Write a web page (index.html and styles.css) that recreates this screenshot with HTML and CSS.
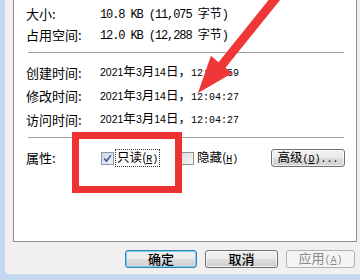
FILE: index.html
```html
<!DOCTYPE html>
<html>
<head>
<meta charset="utf-8">
<link rel="stylesheet" href="styles.css">
</head>
<body>
<div class="window">
  <div class="panel">
    <div class="row">
      <span class="label">大小:</span>
      <span class="val">10.8 KB (11,075 <span class="cj">字节</span>)</span>
    </div>
    <div class="row">
      <span class="label">占用空间:</span>
      <span class="val">12.0 KB (12,288 <span class="cj">字节</span>)</span>
    </div>
    <div class="sep"></div>
    <div class="times">
      <div class="row trow">
        <span class="label">创建时间:</span>
        <span class="date">2021<span class="cj">年</span>3<span class="cj">月</span>14<span class="cj">日，</span><span class="time">12:04:59</span></span>
      </div>
      <div class="row trow">
        <span class="label">修改时间:</span>
        <span class="date">2021<span class="cj">年</span>3<span class="cj">月</span>14<span class="cj">日，</span><span class="time">12:04:27</span></span>
      </div>
      <div class="row trow">
        <span class="label">访问时间:</span>
        <span class="date">2021<span class="cj">年</span>3<span class="cj">月</span>14<span class="cj">日，</span><span class="time">12:04:27</span></span>
      </div>
    </div>
    <div class="sep sep2"></div>
    <div class="attrs">
      <span class="label">属性:</span>
      <label class="check ro">
        <span class="box checked"><svg width="9" height="9" viewBox="0 0 9 9"><path d="M1.2 4.6 L3.4 7.2 L7.9 1.2" fill="none" stroke="#3a5a9c" stroke-width="1.6"/></svg></span>
        <span class="ctext focus">只读(<u class="m">R</u><span class="m">)</span></span>
      </label>
      <label class="check">
        <span class="box"></span>
        <span class="ctext">隐藏(<u class="m">H</u><span class="m">)</span></span>
      </label>
      <button class="btn adv">高级<span class="m">(<u>D</u>)...</span></button>
    </div>
  </div>
  <div class="buttons">
    <button class="btn bottom default">确定</button>
    <button class="btn bottom">取消</button>
    <button class="btn bottom disabled">应用<span class="m">(<u>A</u>)</span></button>
  </div>
</div>
<div class="redbox"></div>
<svg class="arrow" width="360" height="280" viewBox="0 0 360 280">
  <polygon points="198,93 232.1,73.2 225.5,67.8 285.9,-7.2 278.9,-12.8 218.5,62.2 210.9,55.8" fill="#ef3737"/>
</svg>
</body>
</html>
```

FILE: styles.css
```css
html, body {
  margin: 0;
  padding: 0;
}
body {
  width: 360px;
  height: 280px;
  overflow: hidden;
  position: relative;
  background: #c4d8ef;
  font-family: "Noto Sans CJK SC", sans-serif;
  color: #000;
}
.window {
  margin-left: 5px;
  width: 355px;
  height: 274px;
  box-sizing: border-box;
  padding-left: 8px;
  padding-right: 3px;
  background: #f0f0f0;
  border-bottom-left-radius: 4px;
  display: flex;
  flex-direction: column;
}
.panel {
  height: 242px;
  box-sizing: border-box;
  background: #fff;
  border: 1px solid #8d9099;
  border-top: none;
  padding: 3px 12px 0 12px;
  display: flex;
  flex-direction: column;
}
.row {
  height: 21px;
  display: flex;
  align-items: center;
  white-space: nowrap;
}
.trow {
  height: 23.5px;
}
.label {
  width: 74px;
  flex: none;
  font-size: 13px;
  line-height: 16px;
}
.val {
  font-family: "Liberation Mono", monospace;
  font-size: 12px;
  letter-spacing: -1.1px;
  line-height: 16px;
}
.cj {
  font-family: "Noto Sans CJK SC", sans-serif;
  letter-spacing: 0;
  font-size: 12px;
}
.date {
  font-family: "Liberation Sans", sans-serif;
  font-size: 10.5px;
  line-height: 16px;
}
.date .cj {
  font-size: 12.5px;
}
.time {
  font-family: "Liberation Mono", monospace;
  font-size: 10px;
}
.sep {
  margin: 7px 0 0 2px;
  width: 316px;
  height: 1px;
  background: #a0a0a0;
  flex: none;
}
.times {
  margin-top: 8px;
}
.sep2 {
  margin-top: 5.5px;
}
.attrs {
  margin-top: 11px;
  height: 18px;
  display: flex;
  align-items: center;
}
.check {
  display: flex;
  align-items: center;
  font-size: 12.5px;
  line-height: 13px;
}
.ro {
  width: 80px;
}
.box {
  width: 11px;
  height: 11px;
  margin-left: 1px;
  border: 1px solid #8e8f8f;
  background: linear-gradient(135deg, #dadcdf, #f7f7f7);
  display: flex;
  align-items: center;
  justify-content: center;
  flex: none;
}
.box.checked {
  background: linear-gradient(135deg, #cfd8e6, #eef2f8);
  border-color: #8a97ad;
}
.ctext {
  margin-left: 2px;
  padding: 0 1px;
}
.focus {
  outline: 1px dotted #333;
  outline-offset: 0;
}
.m {
  font-family: "Liberation Mono", monospace;
  font-size: 10px;
}
.btn {
  font-family: "Noto Sans CJK SC", sans-serif;
  font-size: 12.5px;
  line-height: 14px;
  color: #000;
  height: 18px;
  padding: 0;
  border: 1px solid #707070;
  border-radius: 3px;
  background: linear-gradient(#f2f2f2 0%, #ebebeb 50%, #dddddd 51%, #cfcfcf 100%);
  box-shadow: inset 0 0 0 1px rgba(255,255,255,0.7);
}
.adv {
  margin-left: auto;
  margin-right: -1px;
  width: 74px;
}
.buttons {
  margin-top: 8px;
  margin-right: 2px;
  display: flex;
  justify-content: flex-end;
  gap: 8px;
}
.bottom {
  width: 73px;
  font-size: 13px;
  font-weight: 500;
}
.default {
  width: 72px;
  border-color: #3c7fb1;
  box-shadow: inset 0 0 0 1px #6fd1f5;
}
.disabled {
  width: 69px;
  color: #8a8a8a;
  border-color: #adb2b5;
  background: #f4f4f4;
  box-shadow: none;
  font-weight: normal;
}
.redbox {
  position: absolute;
  left: 72px;
  top: 132px;
  width: 110px;
  height: 61px;
  box-sizing: border-box;
  border: 7px solid #ee3131;
}
.arrow {
  position: absolute;
  left: 0;
  top: 0;
  pointer-events: none;
}
```
